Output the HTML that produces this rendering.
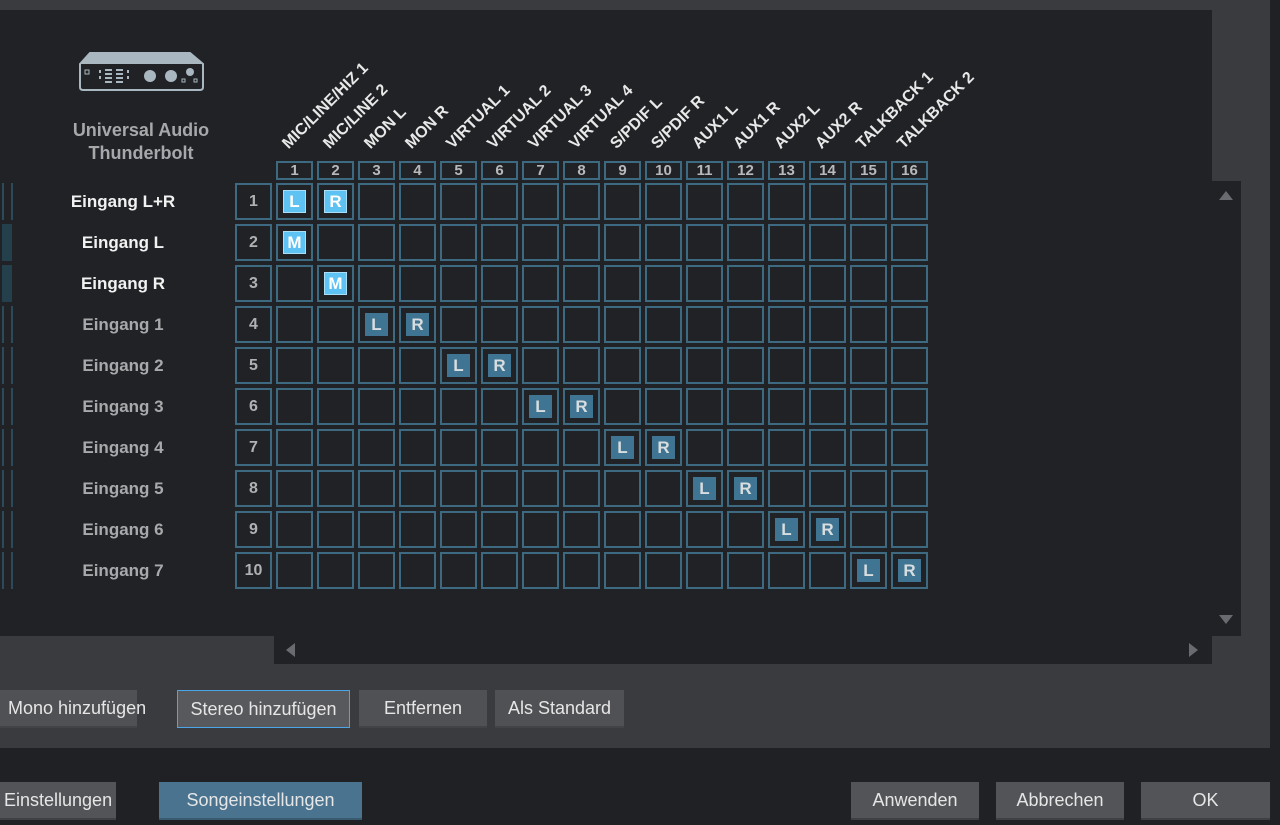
<!DOCTYPE html>
<html><head><meta charset="utf-8"><style>
*{margin:0;padding:0;box-sizing:border-box}
body{width:1280px;height:825px;background:#202124;position:relative;overflow:hidden;font-family:"Liberation Sans",sans-serif}
.a{position:absolute}
.btn{position:absolute;background:#535457;border-bottom:2px solid #3f4043;color:#e6e6e6;font-size:18px;text-align:center;line-height:36px;white-space:nowrap}
.mb{position:absolute;background:#505154;border-bottom:2px solid #424346;color:#e6e6e6;font-size:18px;text-align:center;line-height:36px;height:38px;top:690px;white-space:nowrap}
.lbl{position:absolute;width:200px;left:23px;text-align:center;font-weight:bold;font-size:17px;white-space:nowrap}
.rn{position:absolute;left:235px;width:37px;height:37px;border:2px solid #3d6a80;color:#b0b1b3;font-weight:bold;font-size:16px;text-align:center;line-height:33px}
.hn{position:absolute;top:161px;width:37px;height:19px;border:2px solid #3d6a80;color:#b8b9bb;font-weight:bold;font-size:15px;text-align:center;line-height:15px}
.hd{position:absolute;transform-origin:0 100%;transform:rotate(-45deg);color:#e8e8e8;font-weight:bold;font-size:16px;white-space:nowrap;line-height:18px}
.m{position:absolute;width:23px;height:23px;background:#3f7592;color:#d8dde0;font-weight:bold;font-size:17px;text-align:center;line-height:23px}
.mb2{background:#5ec2f2;color:#fff;border:1px solid #a9def6}
.mt{position:absolute;left:2px;width:11px;height:37px;border-left:2px solid #2b4a5a;border-right:2px solid #2b4a5a}
.ms{position:absolute;left:2px;width:10px;height:37px;background:#25404d}
</style></head><body>
<div class="a" style="left:0;top:0;width:1270px;height:748px;background:#3a3b3f"></div>
<div class="a" style="left:0;top:10px;width:1212px;height:626px;background:#202225"></div>
<div class="a" style="left:1212px;top:181px;width:29px;height:455px;background:#202225"></div>
<div class="a" style="left:274px;top:636px;width:938px;height:28px;background:#202225"></div>
<div class="a" style="left:1219px;top:191px;width:0;height:0;border-left:7px solid transparent;border-right:7px solid transparent;border-bottom:9px solid #6a6b70"></div>
<div class="a" style="left:1219px;top:615px;width:0;height:0;border-left:7px solid transparent;border-right:7px solid transparent;border-top:9px solid #6a6b70"></div>
<div class="a" style="left:286px;top:643px;width:0;height:0;border-top:7px solid transparent;border-bottom:7px solid transparent;border-right:9px solid #6a6b70"></div>
<div class="a" style="left:1189px;top:643px;width:0;height:0;border-top:7px solid transparent;border-bottom:7px solid transparent;border-left:9px solid #6a6b70"></div>

<svg class="a" style="left:78px;top:50px" width="128" height="42" viewBox="0 0 128 42">
<path d="M2 14 L12 3 H112 L125 14 V37 Q125 40 122 40 H5 Q2 40 2 37 Z" fill="none" stroke="#a9b7c0" stroke-width="2"/>
<path d="M2 14 L12 3 H112 L125 14 Z" fill="#a9b7c0"/>
<rect x="7" y="20" width="4" height="4" fill="none" stroke="#a9b7c0"/>
<g fill="#a9b7c0"><rect x="21" y="20" width="2" height="3"/><rect x="21" y="26" width="2" height="3"/>
<rect x="27" y="19" width="7" height="2"/><rect x="27" y="23" width="7" height="2"/><rect x="27" y="27" width="7" height="2"/><rect x="27" y="31" width="7" height="2"/>
<rect x="38" y="19" width="7" height="2"/><rect x="38" y="23" width="7" height="2"/><rect x="38" y="27" width="7" height="2"/><rect x="38" y="31" width="7" height="2"/>
<rect x="49" y="20" width="2" height="3"/><rect x="49" y="26" width="2" height="3"/>
<circle cx="72" cy="26" r="6"/><circle cx="93" cy="26" r="6"/><circle cx="112" cy="22" r="4"/></g>
<rect x="104" y="29" width="3" height="3" fill="none" stroke="#a9b7c0"/><rect x="116" y="29" width="3" height="3" fill="none" stroke="#a9b7c0"/>
</svg>
<div class="a" style="left:41px;top:119px;width:200px;text-align:center;color:#a7a8aa;font-weight:bold;font-size:18px;line-height:23px">Universal Audio<br>Thunderbolt</div>

<svg class="a" style="left:274px;top:181px" width="660" height="412">
<defs><pattern id="p" width="41" height="41" patternUnits="userSpaceOnUse"><rect x="3" y="3" width="35" height="35" fill="none" stroke="#3d6a80" stroke-width="2"/></pattern></defs>
<rect width="656" height="410" fill="url(#p)"/>
</svg>

<div class="hd" style="left:292px;top:135px">MIC/LINE/HIZ 1</div>
<div class="hd" style="left:333px;top:135px">MIC/LINE 2</div>
<div class="hd" style="left:374px;top:135px">MON L</div>
<div class="hd" style="left:415px;top:135px">MON R</div>
<div class="hd" style="left:456px;top:135px">VIRTUAL 1</div>
<div class="hd" style="left:497px;top:135px">VIRTUAL 2</div>
<div class="hd" style="left:538px;top:135px">VIRTUAL 3</div>
<div class="hd" style="left:579px;top:135px">VIRTUAL 4</div>
<div class="hd" style="left:620px;top:135px">S/PDIF L</div>
<div class="hd" style="left:661px;top:135px">S/PDIF R</div>
<div class="hd" style="left:702px;top:135px">AUX1 L</div>
<div class="hd" style="left:743px;top:135px">AUX1 R</div>
<div class="hd" style="left:784px;top:135px">AUX2 L</div>
<div class="hd" style="left:825px;top:135px">AUX2 R</div>
<div class="hd" style="left:866px;top:135px">TALKBACK 1</div>
<div class="hd" style="left:907px;top:135px">TALKBACK 2</div>

<div class="hn" style="left:276px">1</div><div class="hn" style="left:317px">2</div><div class="hn" style="left:358px">3</div><div class="hn" style="left:399px">4</div>
<div class="hn" style="left:440px">5</div><div class="hn" style="left:481px">6</div><div class="hn" style="left:522px">7</div><div class="hn" style="left:563px">8</div>
<div class="hn" style="left:604px">9</div><div class="hn" style="left:645px">10</div><div class="hn" style="left:686px">11</div><div class="hn" style="left:727px">12</div>
<div class="hn" style="left:768px">13</div><div class="hn" style="left:809px">14</div><div class="hn" style="left:850px">15</div><div class="hn" style="left:891px">16</div>

<div class="mt" style="top:183px"></div><div class="ms" style="top:224px"></div><div class="ms" style="top:265px"></div>
<div class="mt" style="top:306px"></div><div class="mt" style="top:347px"></div><div class="mt" style="top:388px"></div><div class="mt" style="top:429px"></div>
<div class="mt" style="top:470px"></div><div class="mt" style="top:511px"></div><div class="mt" style="top:552px"></div>

<div class="lbl" style="top:192px;color:#f2f2f2">Eingang L+R</div>
<div class="lbl" style="top:233px;color:#f2f2f2">Eingang L</div>
<div class="lbl" style="top:274px;color:#f2f2f2">Eingang R</div>
<div class="lbl" style="top:315px;color:#a8a9ab">Eingang 1</div>
<div class="lbl" style="top:356px;color:#a8a9ab">Eingang 2</div>
<div class="lbl" style="top:397px;color:#a8a9ab">Eingang 3</div>
<div class="lbl" style="top:438px;color:#a8a9ab">Eingang 4</div>
<div class="lbl" style="top:479px;color:#a8a9ab">Eingang 5</div>
<div class="lbl" style="top:520px;color:#a8a9ab">Eingang 6</div>
<div class="lbl" style="top:561px;color:#a8a9ab">Eingang 7</div>

<div class="rn" style="top:183px">1</div><div class="rn" style="top:224px">2</div><div class="rn" style="top:265px">3</div><div class="rn" style="top:306px">4</div>
<div class="rn" style="top:347px">5</div><div class="rn" style="top:388px">6</div><div class="rn" style="top:429px">7</div><div class="rn" style="top:470px">8</div>
<div class="rn" style="top:511px">9</div><div class="rn" style="top:552px">10</div>

<div class="m mb2" style="left:283px;top:190px;line-height:21px">L</div>
<div class="m mb2" style="left:324px;top:190px;line-height:21px">R</div>
<div class="m mb2" style="left:283px;top:231px;line-height:21px">M</div>
<div class="m mb2" style="left:324px;top:272px;line-height:21px">M</div>
<div class="m" style="left:365px;top:313px">L</div><div class="m" style="left:406px;top:313px">R</div>
<div class="m" style="left:447px;top:354px">L</div><div class="m" style="left:488px;top:354px">R</div>
<div class="m" style="left:529px;top:395px">L</div><div class="m" style="left:570px;top:395px">R</div>
<div class="m" style="left:611px;top:436px">L</div><div class="m" style="left:652px;top:436px">R</div>
<div class="m" style="left:693px;top:477px">L</div><div class="m" style="left:734px;top:477px">R</div>
<div class="m" style="left:775px;top:518px">L</div><div class="m" style="left:816px;top:518px">R</div>
<div class="m" style="left:857px;top:559px">L</div><div class="m" style="left:898px;top:559px">R</div>

<div class="mb" style="left:0;width:137px;text-align:left;padding-left:8px">Mono hinzufügen</div>
<div class="mb" style="left:177px;width:173px;border:1px solid #4aa6e6;background:#58595c;line-height:36px">Stereo hinzufügen</div>
<div class="mb" style="left:359px;width:128px">Entfernen</div>
<div class="mb" style="left:495px;width:129px">Als Standard</div>

<div class="btn" style="left:0;top:782px;width:116px;height:38px;text-align:left;padding-left:4px">Einstellungen</div>
<div class="btn" style="left:159px;top:782px;width:203px;height:38px;background:#4a7390;border-bottom-color:#3a5a70">Songeinstellungen</div>
<div class="btn" style="left:851px;top:782px;width:128px;height:38px">Anwenden</div>
<div class="btn" style="left:996px;top:782px;width:128px;height:38px">Abbrechen</div>
<div class="btn" style="left:1141px;top:782px;width:129px;height:38px">OK</div>
</body></html>
